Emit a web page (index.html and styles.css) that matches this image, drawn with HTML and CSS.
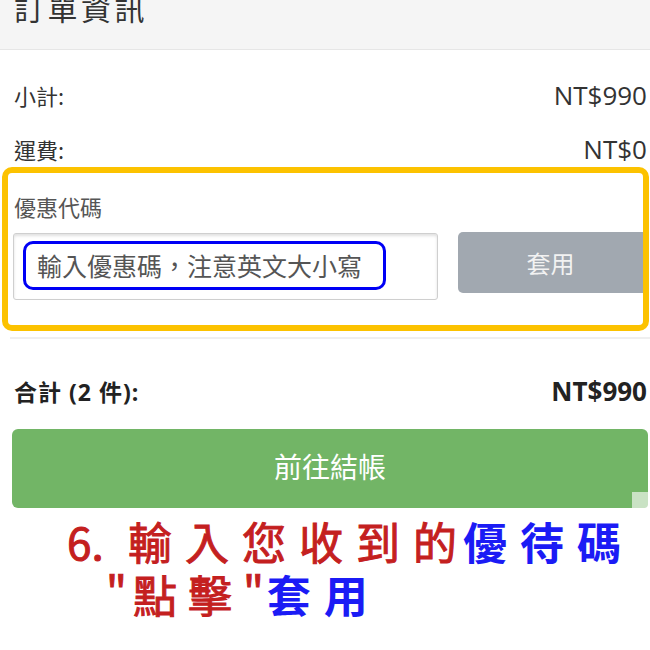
FILE: index.html
```html
<!DOCTYPE html>
<html lang="zh-Hant">
<head>
<meta charset="utf-8">
<link rel="stylesheet" href="styles.css">
</head>
<body>
<div class="page">
  <div class="header"><div class="title">訂單資訊</div></div>
  <div class="rows">
    <div class="row"><span class="lbl">小計:</span><span class="amt">NT$990</span></div>
    <div class="row"><span class="lbl">運費:</span><span class="amt">NT$0</span></div>
  </div>
  <div class="coupon">
    <div class="coupon-label">優惠代碼</div>
    <div class="coupon-row">
      <div class="input">
        <div class="hint">輸入優惠碼，注意英文大小寫</div>
      </div>
      <div class="apply">套用</div>
    </div>
  </div>
  <div class="divider"></div>
  <div class="row total"><span class="lbl">合計 (2 件):</span><span class="amt">NT$990</span></div>
  <div class="checkout">前往結帳<span class="corner"></span></div>
  <div class="caption">
    <div class="line1"><span class="num">6.</span><span class="red">輸入您收到的</span><span class="blue b1">優待碼</span></div>
    <div class="line2"><span class="red q1">"</span><span class="red wide">點擊</span><span class="red q2">"</span><span class="blue b2">套用</span></div>
  </div>
</div>
</body>
</html>
```

FILE: styles.css
```css
html, body {
  margin: 0;
  padding: 0;
  background: #ffffff;
}
body {
  font-family: "Open Sans", "Noto Sans CJK TC", sans-serif;
  color: #333;
}
.page {
  width: 650px;
  height: 650px;
  overflow: hidden;
}
.header {
  height: 49px;
  background: #f5f5f5;
  border-bottom: 1px solid #e6e6e6;
  padding-left: 14px;
  overflow: hidden;
}
.title {
  font-family: "Noto Sans CJK TC", sans-serif;
  font-size: 30px;
  line-height: 30px;
  letter-spacing: 3.5px;
  margin-top: -8px;
  color: #333;
}
.rows {
  padding-top: 30px;
  display: flex;
  flex-direction: column;
  gap: 24px;
}
.row {
  display: flex;
  justify-content: space-between;
  align-items: center;
  height: 30px;
  padding: 0 3px 0 14px;
}
.lbl {
  font-family: "Noto Sans CJK TC", sans-serif;
  font-size: 22px;
  color: #333;
}
.amt {
  font-family: "Open Sans", sans-serif;
  font-size: 26px;
  color: #333;
}
.coupon {
  margin: 3px 1px 0 2px;
  border: 6px solid #fcc200;
  border-radius: 10px;
  padding: 18px 0 25px 6px;
}
.coupon-label {
  font-family: "Noto Sans CJK TC", sans-serif;
  font-size: 22px;
  line-height: 30px;
  color: #555;
}
.coupon-row {
  margin-top: 11px;
  margin-left: -1px;
  display: flex;
  align-items: flex-start;
  gap: 20px;
}
.input {
  width: 425px;
  height: 67px;
  margin-top: 1px;
  border: 1px solid #cfcfcf;
  border-radius: 3px;
  box-shadow: inset 0 2px 3px rgba(0, 0, 0, 0.12);
  padding: 7px 0 0 9px;
  box-sizing: border-box;
}
.hint {
  width: 363px;
  height: 49px;
  box-sizing: border-box;
  border: 3px solid #0000f5;
  border-radius: 10px;
  padding-left: 11px;
  font-family: "Noto Sans CJK TC", sans-serif;
  font-size: 25px;
  line-height: 43px;
  color: #555;
  white-space: nowrap;
}
.apply {
  flex: 1;
  height: 61px;
  background: #a1a8b0;
  border-radius: 5px 0 0 5px;
  color: #f2f2f2;
  font-family: "Noto Sans CJK TC", sans-serif;
  font-size: 24px;
  display: flex;
  align-items: center;
  justify-content: center;
}
.divider {
  margin: 6px 0 0 10px;
  height: 2px;
  background: #efefef;
}
.total {
  margin-top: 37px;
}
.total .lbl {
  font-family: "Open Sans", "Noto Sans CJK TC", sans-serif;
  font-weight: 700;
  font-size: 23px;
  letter-spacing: 1px;
  color: #222;
}
.total .amt {
  font-weight: 700;
  font-size: 26px;
  color: #222;
}
.checkout {
  position: relative;
  margin: 23px 2px 0 12px;
  height: 79px;
  background: #72b566;
  border-radius: 6px;
  color: #ffffff;
  font-family: "Noto Sans CJK TC", sans-serif;
  font-size: 28px;
  display: flex;
  align-items: center;
  justify-content: center;
  padding-bottom: 6px;
  box-sizing: border-box;
}
.corner {
  position: absolute;
  right: 0;
  bottom: 0;
  width: 16px;
  height: 16px;
  background: #c9e2c4;
  border-bottom-right-radius: 4px;
}
.caption {
  margin-top: 7px;
  font-family: "Noto Sans CJK TC", sans-serif;
  font-size: 44px;
  line-height: 53px;
  white-space: nowrap;
}
.line1 {
  padding-left: 67px;
  letter-spacing: 13px;
}
.line2 {
  padding-left: 106px;
  letter-spacing: 0;
}
.num {
  display: inline-block;
  width: 61px;
  letter-spacing: 0;
}
.red {
  color: #c4201f;
  font-weight: 400;
  -webkit-text-stroke: 1px #c4201f;
}
.num {
  color: #c4201f;
  -webkit-text-stroke: 1px #c4201f;
}
.blue {
  color: #1b1bf5;
  font-weight: 700;
}
.b1 {
  margin-left: -7px;
}
.q1 {
  margin-right: 6px;
}
.wide {
  letter-spacing: 11px;
}
.q2 {
  margin-right: 3px;
}
.b2 {
  letter-spacing: 13px;
}
```
